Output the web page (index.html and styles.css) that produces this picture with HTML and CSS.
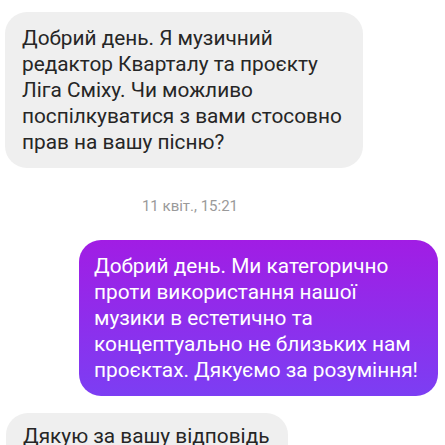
FILE: index.html
```html
<!DOCTYPE html>
<html lang="uk">
<head>
    <meta charset="UTF-8">
    <meta name="viewport" content="width=device-width, initial-scale=1.0">
    <title>Чат</title>
    <link rel="stylesheet" href="styles.css">
</head>
<body>
    <div class="chat">
        <div class="msg msg-in first">
            Добрий день. Я музичний<br>
            редактор Кварталу та проєкту<br>
            Ліга Сміху. Чи можливо<br>
            поспілкуватися з вами стосовно<br>
            прав на вашу пісню?
        </div>

        <div class="time">11 квіт., 15:21</div>

        <div class="msg msg-out">
            Добрий день. Ми категорично<br>
            проти використання нашої<br>
            музики в естетично та<br>
            концептуально не близьких нам<br>
            проєктах. Дякуємо за розуміння!
        </div>

        <div class="msg msg-in last">
            Дякую за вашу відповідь
        </div>
    </div>
</body>
</html>
```

FILE: styles.css
```css
body {
    margin: 0;
    padding: 0;
    background-color: #ffffff;
    font-family: Roboto, "Noto Sans", Arial, sans-serif;
    overflow: hidden;
}
.chat {
    display: flex;
    flex-direction: column;
    padding-top: 12px;
}
.msg {
    font-size: 20.8px;
    line-height: 26px;
    padding: 13px 16px 13px 17px;
    border-radius: 22px;
    box-sizing: border-box;
}
.msg-in {
    background-color: #efefef;
    color: #262626;
    align-self: flex-start;
    margin-left: 5px;
}
.first {
    width: 358px;
}
.last {
    width: 282px;
    margin-left: 6px;
    margin-top: 17px;
    padding-top: 10px;
    padding-bottom: 20px;
}
.time {
    width: 380px;
    text-align: center;
    color: #9a9a9a;
    font-size: 15px;
    margin-top: 29px;
    margin-bottom: 25px;
}
.msg-out {
    align-self: flex-start;
    margin-left: 79px;
    width: 359px;
    padding-left: 15px;
    color: #ffffff;
    background: linear-gradient(to bottom, #a11de4, #7c3ef3);
}
```
